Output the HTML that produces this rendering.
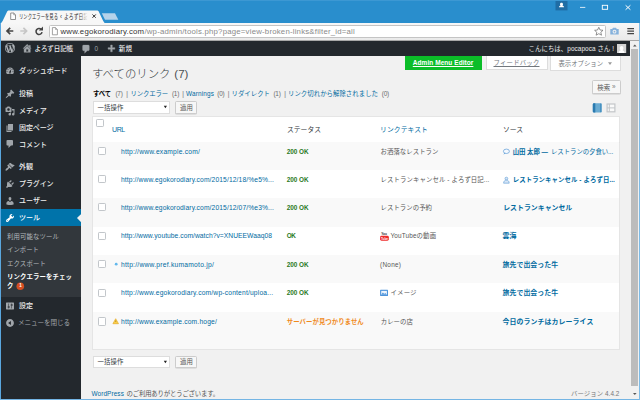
<!DOCTYPE html>
<html lang="ja">
<head>
<meta charset="utf-8">
<title>リンクエラーを見る ‹ よろず日記帳 — WordPress</title>
<style>
*{margin:0;padding:0;box-sizing:border-box}
html,body{width:640px;height:400px;overflow:hidden;background:#298ecd}
body{font-family:"Liberation Sans","Noto Sans CJK JP",sans-serif;color:#444;position:relative}
.a{position:absolute;white-space:nowrap}
.x{position:absolute;white-space:nowrap;line-height:12px;height:12px}
#win{position:absolute;left:0;top:0;width:640px;height:400px;background:#298ecd;overflow:hidden}
#toolbar{left:1px;top:23px;width:637.7px;height:17.6px;background:linear-gradient(#f7f7f7,#eaeaea);border-bottom:1px solid #a8a8a8}
#urlbox{left:48.5px;top:24.6px;width:557px;height:13px;background:#fff;border:1px solid #c4c4c4;border-radius:1.5px}
#adminbar{left:1px;top:40.6px;width:629px;height:15.4px;background:#23282d}
#side{left:1px;top:55.8px;width:79.6px;height:343px;background:#23282d}
#content{left:80.6px;top:55.8px;width:550.4px;height:343px;background:#f1f1f1}
.cb{width:8.2px;height:8.2px;border:.8px solid #c2c6ca;background:#fff;left:98px;border-radius:1.2px}
.rw{left:93.3px;width:526.2px;background:#f9f9f9}
.sel{background:#fff;border:1px solid #ddd;height:12.5px}
.btn{background:#f7f7f7;border:1px solid #ccc;border-radius:1.5px;height:12.5px;box-shadow:0 .5px 0 #ccc}
</style>
</head>
<body>
<div id="win">
<!-- title bar -->
<svg class="a" style="left:0;top:0" width="640" height="24" viewBox="0 0 640 24">
  <polygon points="1,23.200 2.600,21 7.300,11.200 8.300,10.500 97.500,10.500 98.600,11.200 103.200,21 104.800,23.200" fill="#f7f7f7"/>
  <polygon points="101.8,13.2 115,13.2 118.3,19.8 105,19.8" fill="#b5d3ea"/>
  <path d="M10.700 13h3l1.800 1.800v4.700h-4.800z" fill="#fff" stroke="#777" stroke-width=".8"/><path d="M13.700 13v1.800h1.800" fill="none" stroke="#777" stroke-width=".6"/>
  <path d="M92.6 14.6l3 3m0-3l-3 3" stroke="#444" stroke-width=".9" fill="none"/>
  <rect x="555.5" y="0" width="12" height="10.400" fill="#1f6da5"/>
  <path d="M559 7.300c0-1.200 1-1.500 1.600-1.700-.5-.4-.6-.9-.6-1.400 0-.8.600-1.400 1.500-1.400s1.500.6 1.500 1.400c0 .5-.1 1-.6 1.400.6.200 1.600.5 1.600 1.700z" fill="#fff"/>
  <rect x="580" y="6.900" width="5.300" height="1" fill="#fff" fill-opacity=".8"/>
  <rect x="602.300" y="5.300" width="5.300" height="4" fill="none" stroke="#fff" stroke-width=".9"/>
  <path d="M625.600 5.300l4.800 4.400m0-4.400l-4.800 4.400" stroke="#fff" stroke-width="1" fill="none"/>
</svg>
<div class="a" style="left:0;top:0;width:640px;height:1px;background:#3c98d3"></div>
<div class="a" id="toolbar"></div>
<div class="a" style="left:0;top:23px;width:1px;height:377px;background:#5aa7df"></div>
<svg class="a" style="left:0;top:23px" width="640" height="18" viewBox="0 23 640 18">
  <path d="M13.300 31H7.300M10.200 27.900l-3.200 3.100 3.200 3.100" stroke="#444" stroke-width="1.700" fill="none"/>
  <path d="M20.300 31h6M23.400 27.900l3.200 3.100-3.200 3.100" stroke="#c6c6c6" stroke-width="1.700" fill="none"/>
  <path d="M41.200 29.400a3 3 0 1 0 .8 2.700" stroke="#444" stroke-width="1.600" fill="none"/>
  <path d="M38.800 30.600h4.200v-4.200z" fill="#444"/>
  <path d="M610.300 29h1.900l.8-1.200h3l.8 1.200h1.900v5.600h-8.400z" fill="#86b2dc"/>
  <circle cx="614.500" cy="31.700" r="1.900" fill="#f2f2f2"/><circle cx="614.500" cy="31.700" r=".9" fill="#86b2dc"/>
  <path d="M627.300 28.600h6.700M627.300 31.100h6.700M627.300 33.600h6.700" stroke="#444" stroke-width="1.400"/>
</svg>
<div class="a" id="urlbox"></div>
<svg class="a" style="left:50px;top:25px" width="560" height="13" viewBox="50 25 560 13">
  <path d="M52.400 27.600h3.100l1.900 1.900v5.300h-5z" fill="#fff" stroke="#8a8a8a" stroke-width=".8"/><path d="M55.500 27.600v1.900h1.900" fill="none" stroke="#8a8a8a" stroke-width=".6"/>
  <path d="M598.800 27.300l1.300 2.700 2.900.3-2.200 2 .7 2.900-2.700-1.500-2.700 1.500.7-2.900-2.200-2 2.900-.3z" fill="#fff" stroke="#666" stroke-width=".7" stroke-linejoin="round"/>
</svg>

<!-- WP admin bar -->
<div class="a" id="adminbar"></div>
<svg class="a" style="left:4.50px;top:43.20px" width="10" height="10" viewBox="0 0 20 20"><path fill="#b4b9be" stroke="#b4b9be" stroke-width="0.35" fill-rule="evenodd" d="M20 10c0-5.510-4.490-10-10-10C4.480 0 0 4.490 0 10c0 5.520 4.480 10 10 10 5.510 0 10-4.480 10-10zM7.780 15.370L4.370 6.220c.55-.02 1.170-.08 1.170-.08.5-.06.44-1.130-.06-1.110 0 0-1.450.11-2.370.11-.18 0-.37 0-.58-.01C4.120 2.690 6.870 1.110 10 1.110c2.330 0 4.450.87 6.050 2.340-.68-.11-1.650.39-1.650 1.580 0 .74.450 1.360.9 2.100.35.610.55 1.360.55 2.460 0 1.490-1.400 5-1.400 5l-3.030-8.370c.54-.2.820-.17.820-.17.5-.5.440-1.250-.06-1.220 0 0-1.440.12-2.380.12-.87 0-2.330-.12-2.330-.12-.5-.03-.56 1.200-.06 1.220l.92.080 1.260 3.410zM17.410 10c.24-.64.740-1.870.43-4.250.7 1.290 1.050 2.710 1.050 4.250 0 3.290-1.730 6.240-4.400 7.780.97-2.590 1.940-5.200 2.920-7.780zM6.100 18.090C3.120 16.650 1.110 13.530 1.110 10c0-1.300.23-2.480.72-3.590C3.250 10.300 4.670 14.200 6.100 18.090zm4.030-6.630l2.580 6.980c-.86.290-1.760.45-2.710.45-.79 0-1.570-.11-2.290-.33.810-2.380 1.620-4.740 2.420-7.100z"/></svg>
<svg class="a" style="left:21.80px;top:43.40px" width="10.4" height="10.4" viewBox="0 0 20 20"><path fill="#a0a5aa" stroke="#a0a5aa" stroke-width="0.7" fill-rule="evenodd" d="M16 8.500l1.530 1.530-1.060 1.060L10 4.620l-6.470 6.470-1.060-1.060L10 2.500l4 4v-2h2v4zm-6-2.460l6 5.990V18H4v-5.970zM12 17v-5H8v5h4z"/></svg>
<svg class="a" style="left:81.30px;top:43.80px" width="10.4" height="10.4" viewBox="0 0 20 20"><path fill="#a0a5aa" stroke="#a0a5aa" stroke-width="0.5" fill-rule="evenodd" d="M5 2h9q.82 0 1.410.59T16 4v7q0 .82-.59 1.410T14 13h-2l-5 5v-5H5q-.82 0-1.410-.59T3 11V4q0-.82.59-1.410T5 2z"/></svg>
<svg class="a" style="left:105.80px;top:44.10px" width="10.4" height="10.4" viewBox="0 0 20 20"><path fill="#a0a5aa" stroke="#a0a5aa" stroke-width="0.8" fill-rule="evenodd" d="M17 7v3h-5v5H9v-5H4V7h5V2h3v5h5z"/></svg>
<svg class="a" style="left:617.4px;top:43.7px" width="9.2" height="9.2" viewBox="0 0 9.2 9.2"><rect width="9.2" height="9.2" fill="#d4d4d4"/><path d="M1.6 9.2c0-2.300 1.500-2.800 2.200-3-.8-.5-1-1.200-1-2 0-1.300.8-2.100 1.800-2.100s1.800.8 1.800 2.100c0 .8-.2 1.500-1 2 .7.200 2.200.7 2.200 3z" fill="#fff"/></svg>

<!-- sidebar -->
<div class="a" id="side"></div>
<div class="a" style="left:1px;top:209.400px;width:79.600px;height:16.900px;background:#0073aa"></div>
<div class="a" style="left:1px;top:226.300px;width:79.600px;height:70.500px;background:#32373c"></div>
<svg class="a" style="left:76px;top:213px" width="6" height="10" viewBox="0 0 6 10"><polygon points="6,1.500 4.600,1.500 1,5.100 4.600,8.700 6,8.700" fill="#f1f1f1"/></svg>
<svg class="a" style="left:5.00px;top:66.00px" width="10" height="10" viewBox="0 0 20 20"><path fill="#a0a5aa" fill-rule="evenodd" d="M3.760 16h12.480c1.100-1.370 1.760-3.110 1.760-5 0-4.420-3.580-8-8-8s-8 3.580-8 8c0 1.890.66 3.630 1.760 5zM10 4c.55 0 1 .45 1 1s-.45 1-1 1-1-.45-1-1 .45-1 1-1zM6 6c.55 0 1 .45 1 1s-.45 1-1 1-1-.45-1-1 .45-1 1-1zm8 0c.55 0 1 .45 1 1s-.45 1-1 1-1-.45-1-1 .45-1 1-1zm-5.370 5.550L12 7v6c0 1.100-.9 2-2 2s-2-.9-2-2c0-.57.240-1.080.630-1.450zM4 10c.55 0 1 .45 1 1s-.45 1-1 1-1-.45-1-1 .45-1 1-1zm12 0c.55 0 1 .45 1 1s-.45 1-1 1-1-.45-1-1 .45-1 1-1zm-5 3c0-.55-.45-1-1-1s-1 .45-1 1 .45 1 1 1 1-.45 1-1z"/></svg>
<svg class="a" style="left:5.00px;top:88.50px" width="10" height="10" viewBox="0 0 20 20"><path fill="#a0a5aa" fill-rule="evenodd" d="M10.440 3.020l1.820-1.820 6.360 6.350-1.830 1.820c-1.050-.68-2.480-.57-3.410.36l-.75.75c-.92.930-1.040 2.350-.35 3.410l-1.830 1.820-2.410-2.410-2.800 2.790c-.42.420-3.380 2.710-3.800 2.290s1.860-3.390 2.280-3.810l2.790-2.790L4.100 9.360l1.830-1.820c1.050.690 2.480.570 3.400-.36l.75-.75c.930-.92 1.050-2.350.36-3.410z"/></svg>
<svg class="a" style="left:5.00px;top:105.50px" width="10" height="10" viewBox="0 0 20 20"><path fill="#a0a5aa" fill-rule="evenodd" d="M13 11V4c0-.55-.45-1-1-1h-1.670L9 1H5L3.670 3H2c-.55 0-1 .45-1 1v7c0 .55.45 1 1 1h10c.55 0 1-.45 1-1zM7 4.500c1.380 0 2.500 1.120 2.500 2.500S8.380 9.500 7 9.500 4.500 8.380 4.500 7 5.620 4.500 7 4.500zM14 6h5v10.500c0 1.380-1.120 2.500-2.500 2.500S14 17.880 14 16.500s1.120-2.500 2.500-2.500c.17 0 .34.020.5.050V9h-3V6zm-4 8.050V13h2v3.500c0 1.380-1.120 2.500-2.500 2.500S7 17.880 7 16.500 8.120 14 9.500 14c.17 0 .34.020.5.050z"/></svg>
<svg class="a" style="left:5.00px;top:122.50px" width="10" height="10" viewBox="0 0 20 20"><path fill="#a0a5aa" fill-rule="evenodd" d="M6 15V2h10v13H6zm-1 1h8v2H3V5h2v11z"/></svg>
<svg class="a" style="left:5.00px;top:139.30px" width="10" height="10" viewBox="0 0 20 20"><path fill="#a0a5aa" fill-rule="evenodd" d="M5 2h9q.82 0 1.410.59T16 4v7q0 .82-.59 1.410T14 13h-2l-5 5v-5H5q-.82 0-1.410-.59T3 11V4q0-.82.59-1.410T5 2z"/></svg>
<svg class="a" style="left:5.00px;top:162.00px" width="10" height="10" viewBox="0 0 20 20"><path fill="#a0a5aa" fill-rule="evenodd" d="M14.480 11.060L7.410 3.990l1.500-1.500c.5-.56 2.300-.47 3.510.32 1.210.8 1.430 1.280 2.910 2.100 1.180.64 2.450 1.260 4.450.85zm-.71.710L6.700 4.700 4.930 6.470c-.39.390-.39 1.020 0 1.410l1.060 1.060c.39.390.39 1.030 0 1.420-.6.600-1.430 1.110-2.210 1.690-.35.260-.7.530-1.010.840C1.430 14.230.4 16.080 1.400 17.070c.99 1 2.840-.030 4.180-1.360.31-.31.580-.66.850-1.020.57-.78 1.080-1.610 1.690-2.210.39-.39 1.020-.39 1.410 0l1.060 1.060c.39.390 1.020.390 1.410 0z"/></svg>
<svg class="a" style="left:5.00px;top:179.00px" width="10" height="10" viewBox="0 0 20 20"><path fill="#a0a5aa" fill-rule="evenodd" d="M13.110 4.360L9.870 7.600 8 5.730l3.240-3.240c.35-.34 1.050-.2 1.560.32.520.51.660 1.210.31 1.550zm-8 1.770l.91-1.120 9.010 9.010-1.190.84c-.71.710-2.630 1.160-3.820 1.160H6.140L4.900 17.260c-.59.590-1.540.590-2.120 0-.59-.58-.59-1.530 0-2.120l1.240-1.240v-3.880c0-1.130.4-3.190 1.090-3.890zm7.260 3.970l3.240-3.240c.34-.35 1.040-.21 1.550.31.520.51.660 1.210.31 1.550l-3.240 3.250z"/></svg>
<svg class="a" style="left:5.00px;top:196.00px" width="10" height="10" viewBox="0 0 20 20"><path fill="#a0a5aa" fill-rule="evenodd" d="M10 9.250c-2.270 0-2.730-3.440-2.730-3.440C7 4.020 7.820 2 9.970 2c2.160 0 2.980 2.020 2.710 3.810 0 0-.41 3.440-2.680 3.440zm0 2.570L12.720 10c2.390 0 4.520 2.330 4.520 4.530v2.490s-3.650 1.130-7.240 1.130c-3.650 0-7.240-1.130-7.240-1.130v-2.490c0-2.250 1.940-4.480 4.470-4.480z"/></svg>
<svg class="a" style="left:5.00px;top:213.00px" width="10" height="10" viewBox="0 0 20 20"><path fill="#fff" fill-rule="evenodd" d="M16.680 9.770c-1.340 1.340-3.300 1.670-4.950.99l-5.410 6.520c-.99.990-2.590.990-3.580 0s-.99-2.590 0-3.570l6.520-5.420c-.68-1.650-.35-3.610.99-4.950 1.280-1.280 3.120-1.620 4.720-1.060l-2.890 2.890 2.820 2.820 2.860-2.870c.53 1.580.18 3.390-1.080 4.650zM3.810 16.210c.4.390 1.040.390 1.430 0 .4-.4.4-1.040 0-1.430-.39-.4-1.030-.4-1.430 0-.39.390-.39 1.030 0 1.430z"/></svg>
<svg class="a" style="left:5.00px;top:301.30px" width="10" height="10" viewBox="0 0 20 20"><path fill="#a0a5aa" fill-rule="evenodd" d="M18 16V4c0-.55-.45-1-1-1H3c-.55 0-1 .45-1 1v12c0 .55.450 1 1 1h14c.55 0 1-.45 1-1zM8 11h1c.55 0 1 .45 1 1s-.45 1-1 1H8v1.500c0 .28-.22.5-.5.5s-.5-.22-.5-.5V13H6c-.55 0-1-.45-1-1s.45-1 1-1h1V5.500c0-.28.220-.5.5-.5s.5.220.5.500V11zm5-2h-1c-.55 0-1-.45-1-1s.45-1 1-1h1V5.500c0-.28.220-.5.5-.5s.5.220.5.500V7h1c.55 0 1 .45 1 1s-.45 1-1 1h-1v5.500c0 .28-.22.5-.5.5s-.5-.22-.5-.5V9z"/></svg>
<svg class="a" style="left:5.00px;top:317.50px" width="10" height="10" viewBox="0 0 20 20"><path fill="#a0a5aa" fill-rule="evenodd" d="M10 2.160c4.330 0 7.840 3.510 7.840 7.840s-3.510 7.840-7.840 7.840S2.160 14.330 2.160 10 5.670 2.160 10 2.160zM11.840 14V6L6.160 10z"/></svg>
<svg class="a" style="left:16px;top:281.500px" width="9" height="9" viewBox="0 0 9 9"><circle cx="4.300" cy="4.300" r="3.800" fill="#d54e21"/></svg>

<!-- content -->
<div class="a" id="content"></div>
<div class="a" style="left:405px;top:55.800px;width:76.500px;height:14.400px;background:#0bbd28"></div>
<div class="a" style="left:485.500px;top:55.800px;width:62px;height:14.200px;background:#fff;border:1px solid #ddd;border-top:none"></div>
<div class="a" style="left:550.300px;top:55.800px;width:70.300px;height:14.800px;background:#fff;border:1px solid #ddd;border-top:none"></div>
<div class="a btn" style="left:591.500px;top:80.400px;width:29px;height:13.400px"></div>
<div class="a sel" style="left:92.800px;top:101.200px;width:77.700px"></div>
<svg class="a" style="left:163px;top:105px" width="5" height="4" viewBox="0 0 5 4"><path d="M.8.800h3.200l-1.600 2.400z" fill="#222"/></svg>
<div class="a btn" style="left:174.700px;top:101.200px;width:22.800px"></div>
<svg class="a" style="left:590px;top:101px" width="32" height="13" viewBox="590 101 32 13">
  <rect x="592.800" y="103.200" width="9" height="9.300" rx="1.200" fill="#6aabd2"/>
  <path d="M594 103.200h1.300v9.300h-1.300a1.200 1.200 0 0 1-1.200-1.200v-6.900a1.200 1.200 0 0 1 1.200-1.200z" fill="#2a7ab0"/>
  <path d="M600.800 103.500v8.700" stroke="#3c88ba" stroke-width="1"/>
  <rect x="607.100" y="104" width="7.800" height="7.800" fill="#fafafa" stroke="#c3c6c9" stroke-width="1.200"/>
  <path d="M607.100 107.900h7.800M609.300 104v7.800" stroke="#c3c6c9" stroke-width="1"/>
</svg>

<!-- table -->
<div class="a" style="left:92.300px;top:116.200px;width:528.200px;height:233.500px;background:#fff;border:1px solid #e5e5e5"></div>
<div class="a" style="left:93.500px;width:526px;top:141.600px;height:.8px;background:#e1e1e1"></div>
<div class="a rw" style="top:142.400px;height:27.800px"></div>
<div class="a rw" style="top:198.300px;height:28.600px"></div>
<div class="a rw" style="top:255.200px;height:28.300px"></div>
<div class="a rw" style="top:311.700px;height:37px"></div>
<div class="a cb" style="top:119.200px;left:96.300px"></div>
<div class="a cb" style="top:147.200px"></div>
<div class="a cb" style="top:175.200px"></div>
<div class="a cb" style="top:203.200px"></div>
<div class="a cb" style="top:231.800px"></div>
<div class="a cb" style="top:260.300px"></div>
<div class="a cb" style="top:288.800px"></div>
<div class="a cb" style="top:317.400px"></div>
<svg class="a" style="left:93px;top:142px" width="512" height="208" viewBox="93 142 512 208">
  <circle cx="116.200" cy="264.200" r="1.400" fill="#62b8ec"/>
  <path d="M115.700 318.700l2.800 5h-5.600z" fill="#f9cf4a" stroke="#e3a21a" stroke-width=".6" stroke-linejoin="round"/>
  <path d="M115.700 320.400v1.600" stroke="#8a5a00" stroke-width=".5"/>
  <ellipse cx="506.400" cy="151.300" rx="3" ry="2.200" fill="#f4f9ff" stroke="#5b9bd5" stroke-width=".7"/>
  <path d="M504.400 153l-1 1.500 2.200-.9z" fill="#5b9bd5"/>
  <circle cx="506.400" cy="178.600" r="1.400" fill="#d6e5f6" stroke="#5b9bd5" stroke-width=".6"/>
  <path d="M503.600 183.200c0-2.100 1.200-3 2.800-3s2.800.9 2.800 3z" fill="#d6e5f6" stroke="#5b9bd5" stroke-width=".6"/>
  <rect x="380.100" y="235.800" width="8.700" height="4.900" rx="1.400" fill="#ee2b2b"/>
  <text x="381.200" y="235.300" font-size="3.600" font-weight="bold" fill="#222" font-family="Liberation Sans,sans-serif" textLength="5.600" lengthAdjust="spacingAndGlyphs">You</text>
  <text x="381" y="239.700" font-size="3.400" font-weight="bold" fill="#fff" font-family="Liberation Sans,sans-serif" textLength="6.900" lengthAdjust="spacingAndGlyphs">Tube</text>
  <rect x="380.100" y="289.800" width="7.900" height="6.100" rx=".5" fill="#4d94db"/>
  <path d="M381.200 290.900h5.700v3.900h-5.700z" fill="#eef5fd"/>
  <path d="M381.200 294.800l1.700-2.200 1.300 1.300 1-1 1.700 1.900z" fill="#4d94db"/>
</svg>

<div class="a sel" style="left:92.800px;top:355.700px;width:77.700px"></div>
<svg class="a" style="left:163px;top:359.500px" width="5" height="4" viewBox="0 0 5 4"><path d="M.8.800h3.200l-1.600 2.400z" fill="#222"/></svg>
<div class="a btn" style="left:174.700px;top:355.700px;width:22.800px"></div>

<svg class="a" style="left:607px;top:61px" width="6" height="5" viewBox="607 61 6 5"><path d="M608 62.300h4l-2 2.600z" fill="#9a9a9a"/></svg>
<div class="x" style="left:18.50px;top:11.00px;font-size:6.3px;color:#333;transform-origin:0 50%;transform:scaleX(0.688);">リンクエラーを見る</div>
<div class="x" style="left:60.00px;top:11.00px;font-size:6.3px;color:#333;transform-origin:0 50%;transform:scaleX(0.948);">‹</div>
<div class="x" style="left:64.30px;top:11.00px;font-size:6.3px;color:#333;transform-origin:0 50%;transform:scaleX(0.772);">よろず日記</div>
<div class="x" style="left:60.50px;top:25.80px;font-size:7.8px;color:#333;letter-spacing:0.183px;">www.egokorodiary.com</div>
<div class="x" style="left:144.40px;top:25.80px;font-size:7.8px;color:#8a8a8a;letter-spacing:0.208px;">/wp-admin/tools.php?page=view-broken-links&amp;filter_id=all</div>
<div class="x" style="left:34.50px;top:43.00px;font-size:6.5px;color:#eee;letter-spacing:-0.083px;font-weight:500;">よろず日記帳</div>
<div class="x" style="left:94.50px;top:43.00px;font-size:6.4px;color:#a0a5aa;">0</div>
<div class="x" style="left:118.70px;top:43.00px;font-size:6.5px;color:#eee;letter-spacing:0.250px;font-weight:500;">新規</div>
<div class="x" style="left:528.50px;top:43.00px;font-size:6.4px;color:#eee;letter-spacing:0.070px;">こんにちは、pocapoca さん !</div>
<div class="x" style="left:19.00px;top:65.40px;font-size:7px;color:#eee;letter-spacing:-0.071px;font-weight:500;">ダッシュボード</div>
<div class="x" style="left:19.00px;top:87.60px;font-size:7px;color:#eee;font-weight:500;">投稿</div>
<div class="x" style="left:19.00px;top:104.60px;font-size:7px;color:#eee;letter-spacing:0.121px;font-weight:500;">メディア</div>
<div class="x" style="left:19.00px;top:122.20px;font-size:7px;color:#eee;letter-spacing:-0.075px;font-weight:500;">固定ページ</div>
<div class="x" style="left:19.00px;top:138.90px;font-size:7px;color:#eee;font-weight:500;">コメント</div>
<div class="x" style="left:19.00px;top:161.20px;font-size:7px;color:#eee;font-weight:500;">外観</div>
<div class="x" style="left:19.00px;top:178.10px;font-size:7px;color:#eee;letter-spacing:-0.100px;font-weight:500;">プラグイン</div>
<div class="x" style="left:19.00px;top:195.00px;font-size:7px;color:#eee;letter-spacing:0.031px;font-weight:500;">ユーザー</div>
<div class="x" style="left:19.00px;top:212.20px;font-size:7px;color:#fff;font-weight:500;">ツール</div>
<div class="x" style="left:7.00px;top:231.30px;font-size:6.4px;color:#b4b9be;letter-spacing:0.109px;">利用可能なツール</div>
<div class="x" style="left:7.00px;top:244.20px;font-size:6.4px;color:#b4b9be;letter-spacing:0.009px;">インポート</div>
<div class="x" style="left:7.00px;top:257.60px;font-size:6.4px;color:#b4b9be;letter-spacing:0.141px;">エクスポート</div>
<div class="x" style="left:7.00px;top:271.20px;font-size:6.4px;color:#fff;font-weight:bold;letter-spacing:0.109px;">リンクエラーをチェッ</div>
<div class="x" style="left:7.00px;top:279.90px;font-size:6.4px;color:#fff;font-weight:bold;letter-spacing:-0.191px;">ク</div>
<div class="x" style="left:19.20px;top:280.20px;font-size:4.6px;color:#fff;font-weight:bold;">1</div>
<div class="x" style="left:19.00px;top:299.90px;font-size:7px;color:#eee;font-weight:500;">設定</div>
<div class="x" style="left:18.00px;top:317.00px;font-size:6.6px;color:#a0a5aa;letter-spacing:-0.094px;">メニューを閉じる</div>
<div class="x" style="left:412.80px;top:56.80px;font-size:6.5px;color:#fff;font-weight:bold;letter-spacing:0.059px;text-decoration:underline;">Admin Menu Editor</div>
<div class="x" style="left:493.50px;top:57.00px;font-size:6.4px;color:#72777c;letter-spacing:0.199px;text-decoration:underline;">フィードバック</div>
<div class="x" style="left:558.50px;top:58.30px;font-size:6.4px;color:#72777c;letter-spacing:-0.033px;">表示オプション</div>
<div class="x" style="left:92.00px;top:67.70px;font-size:11.4px;color:#32373c;font-weight:300;">すべてのリンク</div>
<div class="x" style="left:174.30px;top:67.70px;font-size:11.4px;color:#4a4e52;letter-spacing:0.093px;">(7)</div>
<div class="x" style="left:597.30px;top:81.70px;font-size:6.4px;color:#555;letter-spacing:-0.041px;">検索</div>
<div class="x" style="left:612.00px;top:81.40px;font-size:6.4px;color:#777;">»</div>
<div class="x" style="left:93.00px;top:87.70px;font-size:6.4px;color:#000;font-weight:bold;letter-spacing:-0.156px;">すべて</div>
<div class="x" style="left:115.50px;top:87.70px;font-size:6.4px;color:#6a6a6a;letter-spacing:-0.271px;">(7)</div>
<div class="x" style="left:126.30px;top:87.70px;font-size:6.4px;color:#666;">|</div>
<div class="x" style="left:130.50px;top:87.70px;font-size:6.4px;color:#006a9f;letter-spacing:-0.141px;">リンクエラー</div>
<div class="x" style="left:172.00px;top:87.70px;font-size:6.4px;color:#6a6a6a;letter-spacing:-0.271px;">(1)</div>
<div class="x" style="left:182.30px;top:87.70px;font-size:6.4px;color:#666;">|</div>
<div class="x" style="left:186.00px;top:87.70px;font-size:6.4px;color:#006a9f;letter-spacing:0.154px;">Warnings</div>
<div class="x" style="left:217.30px;top:87.70px;font-size:6.4px;color:#6a6a6a;letter-spacing:-0.204px;">(0)</div>
<div class="x" style="left:227.80px;top:87.70px;font-size:6.4px;color:#666;">|</div>
<div class="x" style="left:231.50px;top:87.70px;font-size:6.4px;color:#006a9f;letter-spacing:0.026px;">リダイレクト</div>
<div class="x" style="left:273.50px;top:87.70px;font-size:6.4px;color:#6a6a6a;letter-spacing:-0.271px;">(1)</div>
<div class="x" style="left:284.20px;top:87.70px;font-size:6.4px;color:#666;">|</div>
<div class="x" style="left:288.00px;top:87.70px;font-size:6.4px;color:#006a9f;letter-spacing:0.038px;">リンク切れから解除されました</div>
<div class="x" style="left:381.70px;top:87.70px;font-size:6.4px;color:#6a6a6a;letter-spacing:-0.171px;">(0)</div>
<div class="x" style="left:97.50px;top:101.70px;font-size:6.4px;color:#32373c;letter-spacing:0.109px;">一括操作</div>
<div class="x" style="left:180.00px;top:101.70px;font-size:6.4px;color:#555;letter-spacing:0.109px;">適用</div>
<div class="x" style="left:97.50px;top:356.20px;font-size:6.4px;color:#32373c;letter-spacing:0.109px;">一括操作</div>
<div class="x" style="left:180.00px;top:356.20px;font-size:6.4px;color:#555;letter-spacing:0.109px;">適用</div>
<div class="x" style="left:112.00px;top:124.00px;font-size:7px;color:#006a9f;letter-spacing:-0.405px;">URL</div>
<div class="x" style="left:287.00px;top:124.20px;font-size:6.8px;color:#32373c;">ステータス</div>
<div class="x" style="left:380.00px;top:124.20px;font-size:6.8px;color:#006a9f;letter-spacing:0.089px;">リンクテキスト</div>
<div class="x" style="left:503.00px;top:124.20px;font-size:6.8px;color:#32373c;letter-spacing:-0.021px;">ソース</div>
<div class="x" style="left:121.00px;top:145.90px;font-size:6.7px;color:#006a9f;letter-spacing:0.202px;">http://www.example.com/</div>
<div class="x" style="left:121.00px;top:173.90px;font-size:6.7px;color:#006a9f;letter-spacing:0.120px;">http://www.egokorodiary.com/2015/12/18/%e5%...</div>
<div class="x" style="left:121.00px;top:201.90px;font-size:6.7px;color:#006a9f;letter-spacing:0.120px;">http://www.egokorodiary.com/2015/12/07/%e3%...</div>
<div class="x" style="left:121.00px;top:230.20px;font-size:6.7px;color:#006a9f;letter-spacing:0.048px;">http://www.youtube.com/watch?v=XNUEEWaaq08</div>
<div class="x" style="left:121.00px;top:258.60px;font-size:6.7px;color:#006a9f;letter-spacing:0.242px;">http://www.pref.kumamoto.jp/</div>
<div class="x" style="left:121.00px;top:287.00px;font-size:6.7px;color:#006a9f;letter-spacing:0.184px;">http://www.egokorodiary.com/wp-content/uploa...</div>
<div class="x" style="left:121.00px;top:315.90px;font-size:6.7px;color:#006a9f;letter-spacing:0.176px;">http://www.example.com.hoge/</div>
<div class="x" style="left:286.80px;top:145.90px;font-size:6.4px;color:#2b7a1e;font-weight:bold;letter-spacing:-0.055px;">200 OK</div>
<div class="x" style="left:286.80px;top:173.90px;font-size:6.4px;color:#2b7a1e;font-weight:bold;letter-spacing:-0.055px;">200 OK</div>
<div class="x" style="left:286.80px;top:201.90px;font-size:6.4px;color:#2b7a1e;font-weight:bold;letter-spacing:-0.055px;">200 OK</div>
<div class="x" style="left:286.80px;top:230.20px;font-size:6.4px;color:#2b7a1e;font-weight:bold;letter-spacing:-0.447px;">OK</div>
<div class="x" style="left:286.80px;top:258.60px;font-size:6.4px;color:#2b7a1e;font-weight:bold;letter-spacing:-0.055px;">200 OK</div>
<div class="x" style="left:286.80px;top:287.00px;font-size:6.4px;color:#2b7a1e;font-weight:bold;letter-spacing:-0.055px;">200 OK</div>
<div class="x" style="left:286.80px;top:315.90px;font-size:6.4px;color:#f08a1c;font-weight:bold;letter-spacing:0.047px;">サーバーが見つかりません</div>
<div class="x" style="left:380.50px;top:145.90px;font-size:6.4px;color:#555;letter-spacing:0.054px;">お洒落なレストラン</div>
<div class="x" style="left:380.50px;top:173.90px;font-size:6.4px;color:#555;letter-spacing:0.101px;">レストランキャンセル - よろず日記...</div>
<div class="x" style="left:380.50px;top:201.90px;font-size:6.4px;color:#555;letter-spacing:0.047px;">レストランの予約</div>
<div class="x" style="left:390.50px;top:230.20px;font-size:6.4px;color:#555;letter-spacing:0.140px;">YouTubeの動画</div>
<div class="x" style="left:380.00px;top:258.60px;font-size:6.4px;color:#555;letter-spacing:0.276px;">(None)</div>
<div class="x" style="left:390.50px;top:287.00px;font-size:6.4px;color:#555;letter-spacing:0.191px;">イメージ</div>
<div class="x" style="left:380.70px;top:315.90px;font-size:6.4px;color:#555;letter-spacing:0.069px;">カレーの店</div>
<div class="x" style="left:512.70px;top:145.90px;font-size:6.4px;color:#006a9f;font-weight:bold;letter-spacing:-0.049px;">山田 太郎</div>
<div class="x" style="left:541.60px;top:145.90px;font-size:6.4px;color:#006a9f;font-weight:bold;letter-spacing:-0.191px;">—</div>
<div class="x" style="left:551.00px;top:145.90px;font-size:6.4px;color:#006a9f;letter-spacing:-0.045px;">レストランの夕食い...</div>
<div class="x" style="left:512.70px;top:173.90px;font-size:6.4px;color:#006a9f;font-weight:bold;letter-spacing:0.091px;">レストランキャンセル - よろず日...</div>
<div class="x" style="left:503.20px;top:201.90px;font-size:6.9px;color:#006a9f;font-weight:bold;letter-spacing:0.019px;">レストランキャンセル</div>
<div class="x" style="left:502.60px;top:230.20px;font-size:6.9px;color:#006a9f;font-weight:bold;letter-spacing:-0.041px;">雲海</div>
<div class="x" style="left:502.60px;top:258.60px;font-size:6.9px;color:#006a9f;font-weight:bold;letter-spacing:0.047px;">旅先で出会った牛</div>
<div class="x" style="left:502.60px;top:287.00px;font-size:6.9px;color:#006a9f;font-weight:bold;letter-spacing:0.047px;">旅先で出会った牛</div>
<div class="x" style="left:502.60px;top:315.90px;font-size:6.9px;color:#006a9f;font-weight:bold;letter-spacing:0.110px;">今日のランチはカレーライス</div>
<div class="x" style="left:91.50px;top:387.60px;font-size:6.4px;color:#006a9f;letter-spacing:0.111px;">WordPress</div>
<div class="x" style="left:126.50px;top:387.60px;font-size:6.4px;color:#555;letter-spacing:-0.181px;">のご利用ありがとうございます。</div>
<div class="x" style="left:571.00px;top:387.60px;font-size:6.4px;color:#777;letter-spacing:0.061px;">バージョン 4.4.2</div>
<div class="a" style="left:80px;top:11px;width:9px;height:12px;background:linear-gradient(90deg,rgba(247,247,247,0),#f7f7f7 85%)"></div><div class="a" style="left:89px;top:11px;width:3px;height:12px;background:#f7f7f7"></div>
<svg class="a" style="left:91px;top:13px" width="6" height="6" viewBox="91 13 6 6"><path d="M92.600 14.600l3 3m0-3l-3 3" stroke="#444" stroke-width=".9" fill="none"/></svg>

<!-- scrollbar -->
<div class="a" style="left:630px;top:40.600px;width:8.700px;height:358px;background:#f1f1f1"></div>
<div class="a" style="left:631.400px;top:49px;width:6.400px;height:337.400px;background:#bcbcbc"></div>
<svg class="a" style="left:631px;top:41px" width="8" height="358" viewBox="631 41 8 358">
  <path d="M633 46.500l1.800-2 1.800 2z" fill="#555"/>
  <path d="M633 393l1.800 2 1.800-2z" fill="#555"/>
</svg>
<div class="a" style="left:0;top:398.800px;width:640px;height:1.200px;background:#74b5e4"></div>
<div class="a" style="left:638.700px;top:23px;width:1.300px;height:377px;background:#7dbbe6"></div>
</div>
</body>
</html>
